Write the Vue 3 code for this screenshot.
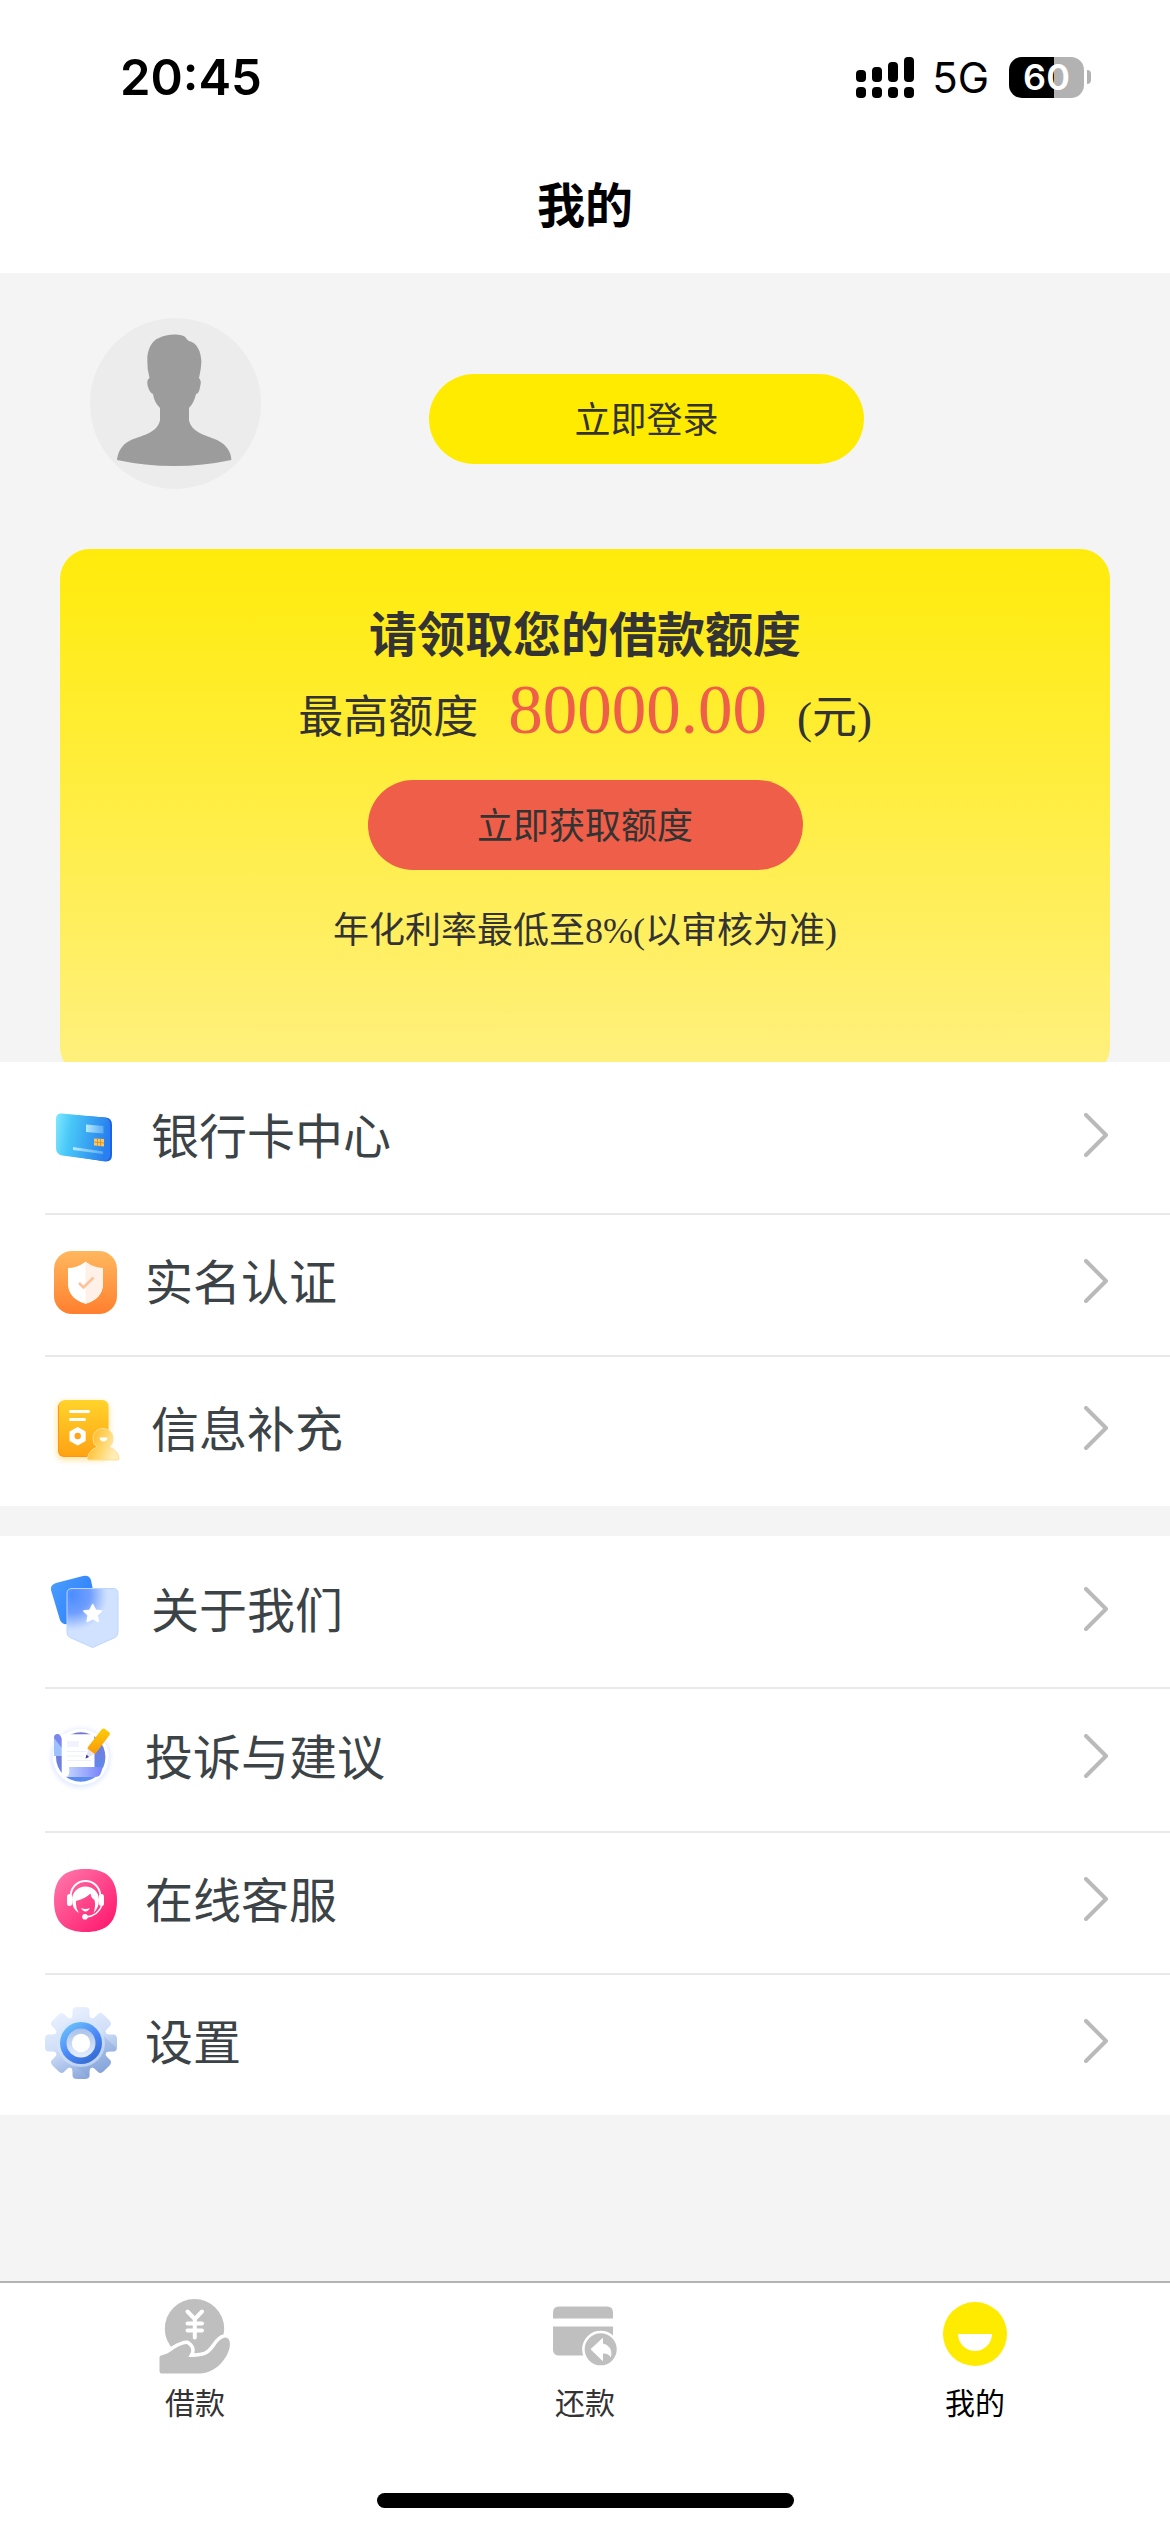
<template>
  <div class="page">
    <header class="top">
      <div class="status-bar">
        <span class="time">20:45</span>
        <div class="status-right">
          <svg class="signal" viewBox="0 0 58 41" aria-hidden="true">
            <rect x="0" y="13" width="10" height="12" rx="4" />
            <rect x="16" y="10" width="10" height="15" rx="4" />
            <rect x="32" y="5" width="10" height="20" rx="4" />
            <rect x="48" y="0" width="10" height="25" rx="4" />
            <rect v-for="x in [0, 16, 32, 48]" :key="x" :x="x" y="30" width="10" height="11" rx="4" />
          </svg>
          <span class="network">5G</span>
          <div class="battery">
            <span class="battery-body">60</span>
            <span class="battery-tip"></span>
          </div>
        </div>
      </div>
      <h1 class="title">我的</h1>
    </header>

    <main class="content">
      <section class="profile">
        <svg class="avatar" viewBox="0 0 171 171" aria-hidden="true">
          <circle cx="85.5" cy="85.5" r="85.5" fill="#ececec" />
          <path
            fill="#9c9c9c"
            d="M69 20C76 16 92 15 96 20Q97 22 99 23C107 25 111 33 111.400 44Q111 52 109 60Q112 63 110 69Q109 76 106 76Q104 85 99 90V102C101 114 115 117 127 122C137 127 141 134 141.400 142Q113 148 84 148Q55 148 27 142C28 134 31 127 41 122C54 117 68 114 70 102V90Q64 84 63 76Q60 75 58 69Q56 62 59.500 60Q57 51 57.300 42C57 32 62 22 69 20Z"
          />
        </svg>
        <button class="pill login">立即登录</button>
      </section>

      <section class="quota-card">
        <h2 class="quota-title">请领取您的借款额度</h2>
        <p class="quota-line">
          <span>最高额度</span>
          <span class="amount">80000.00</span>
          <span>(元)</span>
        </p>
        <button class="pill apply">立即获取额度</button>
        <p class="rate">年化利率最低至8%(以审核为准)</p>
      </section>

      <nav v-for="(group, i) in groups" :key="i" class="menu">
        <a v-for="item in group" :key="item.icon" href="#" class="menu-row" :class="item.size">
          <svg class="menu-icon" viewBox="0 0 80 80" aria-hidden="true">
            <g v-if="item.icon === 'bank'">
              <defs>
                <linearGradient id="bank-bg" x2="1" y2="0.15">
                  <stop offset="0" stop-color="#80e8ff" />
                  <stop offset="0.3" stop-color="#49c8f7" />
                  <stop offset="0.9" stop-color="#2d8bee" />
                  <stop offset="1" stop-color="#2a7ff0" />
                </linearGradient>
                <linearGradient id="bank-line">
                  <stop offset="0" stop-color="#b5eaff" />
                  <stop offset="1" stop-color="#58abf4" />
                </linearGradient>
              </defs>
              <path fill="#1b62ea" d="M24 18L61 20.500Q67 21 67 28V58Q67 65 60 64.500L20 58Z" />
              <path fill="url(#bank-bg)" d="M17 16.500L59 20.500Q65 21 65 28V57Q65 64 59 64L17 58.500Q11 57 11 51V22Q11 16 17 16.500Z" />
              <path fill="url(#bank-line)" d="M41 27.500L58.500 29V36.500L41 35Z" />
              <path fill="url(#bank-line)" d="M28 50L58 54.500V57L28 53Z" />
              <path fill="#fbc65c" d="M49 41.500L59 42V49.500L49 48.500Z" />
              <path stroke="#c48f3c" stroke-width="0.8" fill="none" d="M52.500 42V49M55.500 42V49M49 45L59 46" />
            </g>

            <g v-else-if="item.icon === 'verify'">
              <defs>
                <linearGradient id="verify-bg" x2="0" y2="1">
                  <stop offset="0" stop-color="#ffb85e" />
                  <stop offset="1" stop-color="#ff7f2e" />
                </linearGradient>
              </defs>
              <rect x="9" y="8" width="63" height="63" rx="18" fill="url(#verify-bg)" />
              <path fill="#fff" d="M40.500 18.700Q32 25 23 25V42Q24 56 40.500 60.700Q57 56 58 42V25Q49 25 40.500 18.700Z" />
              <path fill="#fff1e8" d="M40.500 18.700V60.700Q57 56 58 42V25Q49 25 40.500 18.700Z" />
              <path fill="none" stroke="#ffc298" stroke-width="2.600" d="M34 40L38.500 44.500L48.500 34.500" />
            </g>

            <g v-else-if="item.icon === 'info'">
              <defs>
                <linearGradient id="info-bg" x2="0" y2="1">
                  <stop offset="0" stop-color="#ffd32b" />
                  <stop offset="1" stop-color="#ffa313" />
                </linearGradient>
                <linearGradient id="info-man" x2="1" y2="0.4">
                  <stop offset="0.1" stop-color="#ffb51c" />
                  <stop offset="0.6" stop-color="#ffd66a" />
                  <stop offset="1" stop-color="#ffedb8" />
                </linearGradient>
                <filter id="info-glow" x="-30%" y="-30%" width="160%" height="160%">
                  <feGaussianBlur stdDeviation="3" />
                </filter>
              </defs>
              <rect x="12" y="12" width="52" height="58" rx="7" fill="#ffe3a0" filter="url(#info-glow)" />
              <rect x="13" y="11" width="40" height="56" rx="6" fill="#ff9512" />
              <rect x="14" y="10" width="49.500" height="56" rx="6" fill="url(#info-bg)" />
              <path stroke="#fff" stroke-width="3" stroke-linecap="round" d="M25.500 21.500H43.500M25.500 29.500H39.500" />
              <path fill="#fff" stroke="#fff" stroke-width="2" stroke-linejoin="round" d="M32.700 38L39.700 42V50.500L32.700 54.500L25.500 50.500V42Z" />
              <circle cx="32.700" cy="46" r="3.200" fill="#ffa61b" />
              <path
                fill="url(#info-man)"
                stroke="#ffdf91"
                d="M58 38.500C64 38.500 68 43 68 48.500Q68 54 64 57Q74 61 74 69Q74 70 72 70H44Q42 70 42.500 68Q44 60 52 57Q48 54 48 48.500C48 43 52 38.500 58 38.500Z"
              />
              <path fill="#fff" d="M54.500 47.500H62.500Q62 51.500 58.500 51.500T54.500 47.500Z" />
            </g>

            <g v-else-if="item.icon === 'about'">
              <defs>
                <linearGradient id="about-back" x2="1" y2="0.6">
                  <stop offset="0" stop-color="#4b9fff" />
                  <stop offset="1" stop-color="#2c7df8" />
                </linearGradient>
                <radialGradient id="about-front" gradientUnits="userSpaceOnUse" cx="27" cy="24" r="36">
                  <stop offset="0" stop-color="#4a8dff" />
                  <stop offset="0.5" stop-color="#6f9eff" />
                  <stop offset="0.9" stop-color="#c3d8ff" />
                  <stop offset="1" stop-color="#d0e2ff" />
                </radialGradient>
              </defs>
              <path fill="url(#about-back)" d="M11 12L38 5Q44 3.500 46 9L53 45L23 53Q17 54 15 49L6 19Q5 14 11 12Z" />
              <path
                fill="url(#about-front)"
                stroke="#bcd5ff"
                d="M27 17.500H68Q73 17.500 73 22.500V61Q73 65 70 66.500L47.700 76.500L25 66.500Q22 65 22 61V22.500Q22 17.500 27 17.500Z"
              />
              <path
                fill="#fff"
                stroke="#fff"
                stroke-width="1.500"
                stroke-linejoin="round"
                d="M47.700 33.500L50.500 39.200L56.700 40L52.200 44.300L53.300 50.500L47.700 47.600L42.100 50.500L43.200 44.300L38.700 40L44.900 39.200Z"
              />
            </g>

            <g v-else-if="item.icon === 'feedback'">
              <defs>
                <linearGradient id="fb-bg" x2="0.3" y2="1">
                  <stop offset="0" stop-color="#7272cf" />
                  <stop offset="0.6" stop-color="#6d80e0" />
                  <stop offset="1" stop-color="#5a8bee" />
                </linearGradient>
                <linearGradient id="fb-roll">
                  <stop offset="0" stop-color="#c8d9ff" />
                  <stop offset="1" stop-color="#7783fa" />
                </linearGradient>
                <linearGradient id="fb-pen" x2="0" y2="1">
                  <stop offset="0" stop-color="#ffcb08" />
                  <stop offset="1" stop-color="#f79b09" />
                </linearGradient>
                <filter id="fb-glow" x="-30%" y="-30%" width="160%" height="160%">
                  <feGaussianBlur stdDeviation="2" />
                </filter>
              </defs>
              <circle cx="35.700" cy="40" r="30" fill="#e4ecff" filter="url(#fb-glow)" />
              <circle cx="35.700" cy="39" r="28" fill="#fff" />
              <circle cx="35.700" cy="39" r="24.700" fill="url(#fb-bg)" />
              <path fill="#9fc0ff" d="M9 38V20Q9 16 13 16Q17 16 17 20V38Z" />
              <path fill="#7b85ee" d="M9 20Q9 16 13 16Q17 16 17 20V30Z" />
              <path fill="url(#fb-roll)" d="M24 49H57Q57 59 50 59H20Q25 56 24 49Z" />
              <path fill="#fff" d="M13 16.300H46Q49.500 17 49.500 21V49H24Q26 59 19 59Q16.700 58 16.700 54V21Q16 17 13 16.300Z" />
              <rect x="22" y="23" width="12" height="6" rx="1" fill="#f1f4ff" />
              <path stroke="#eceffd" d="M22 33.500H41M22 38H38M22 42.500H46" />
              <path fill="url(#fb-pen)" d="M57 11Q58.300 10 60 11L64.500 14.500Q65.500 16 64.500 17L51 35Q50 36.500 48.500 35.500L43 31.500Q42 30.500 43 29Z" />
              <path fill="#e3e5f5" d="M43 31L49.500 36L41 40.500Z" />
              <path fill="#393a8d" d="M41.500 36.500L44 39L40.500 40.500Z" />
            </g>

            <g v-else-if="item.icon === 'service'">
              <defs>
                <linearGradient id="service-bg" x2="1" y2="1">
                  <stop offset="0.1" stop-color="#ff71a7" />
                  <stop offset="0.9" stop-color="#ff1c70" />
                </linearGradient>
              </defs>
              <path
                fill="url(#service-bg)"
                d="M40.500 8C62 8 72 18 72 39.500S62 71 40.500 71S9 61 9 39.500S19 8 40.500 8Z"
              />
              <path fill="none" stroke="#fff" stroke-width="2" d="M25.500 35C27 15 54 15 55.500 35" />
              <rect x="22" y="33" width="5" height="12" rx="2.500" fill="#fff" />
              <rect x="54" y="33" width="5" height="12" rx="2.500" fill="#fff" />
              <path
                fill="#fff"
                d="M40.500 25.500C48 25.500 54 31 54 39Q54 47 48.500 52Q51 45 49.500 39Q46 37 45.500 32.500Q41 37 31 40Q30.500 47 34 52Q27 48 27 39C27 31 33 25.500 40.500 25.500Z"
              />
              <path fill="#fff" d="M36 47Q40.500 49 45 47Q43 50.500 40.500 50.500T36 47Z" />
              <path fill="none" stroke="#fff" stroke-width="1.500" d="M57 44Q53 55 41 56" />
              <circle cx="40" cy="55.700" r="2.800" fill="#fff" />
            </g>

            <g v-else>
              <defs>
                <linearGradient id="gear-bg" x1="0.2" x2="0.6" y2="1">
                  <stop offset="0" stop-color="#edf3ff" />
                  <stop offset="0.5" stop-color="#cfdff8" />
                  <stop offset="1" stop-color="#87a5da" />
                </linearGradient>
                <linearGradient id="gear-ring" x2="0.7" y2="1">
                  <stop offset="0" stop-color="#74cdfb" />
                  <stop offset="0.6" stop-color="#4a88f7" />
                  <stop offset="1" stop-color="#356bd2" />
                </linearGradient>
                <linearGradient id="gear-hub" x2="0" y2="1">
                  <stop offset="0" stop-color="#a9c0e8" />
                  <stop offset="1" stop-color="#e6efff" />
                </linearGradient>
                <clipPath id="gear-shape">
                  <circle cx="36" cy="40" r="27" />
                  <path
                    v-for="n in 8"
                    :key="n"
                    d="M26 16Q27.500 14 27.500 11V7Q28 4 32 4H40Q44 4 44.500 7V11Q44.500 14 46 16Z"
                    :transform="`rotate(${n * 45} 36 40)`"
                  />
                </clipPath>
              </defs>
              <g clip-path="url(#gear-shape)">
                <rect y="4" width="72" height="72" fill="url(#gear-bg)" />
                <path fill="#7e9fd8" opacity="0.3" d="M51 25L74 48L60 76H46L22 56Z" />
                <circle cx="36" cy="40" r="24" fill="#d7e6fc" opacity="0.6" />
              </g>
              <circle cx="36" cy="40" r="21" fill="url(#gear-ring)" />
              <circle cx="36" cy="40" r="14.500" fill="url(#gear-hub)" />
              <circle cx="36" cy="40" r="9.200" fill="#fff" />
            </g>
          </svg>
          <span class="menu-label">{{ item.label }}</span>
          <svg class="chevron" viewBox="0 0 24 44" aria-hidden="true">
            <path d="M2 2L22 22L2 42" />
          </svg>
        </a>
      </nav>
    </main>

    <footer class="bottom">
      <nav class="tabs">
        <a href="#" class="tab">
          <svg class="tab-icon" viewBox="0 0 72 75" aria-hidden="true">
            <circle cx="35.500" cy="29.700" r="29.700" fill="#bfbfbf" />
            <path
              fill="none"
              stroke="#fff"
              stroke-width="4"
              stroke-linecap="round"
              d="M28.500 12.500L35.800 20L43 12.500M35.800 20V38.500M28.500 24.500H43M28.500 31.500H43"
            />
            <path
              class="hand"
              d="M0.500 58Q0.500 57 2 56.500Q9 55 15 50C20 47 25 44.500 28 45Q33 48 32 53Q31 55 29.500 58Q40 58 46 56C54 53 56 45 61 41Q63 39 66 38.500C71 38.500 71.500 44 70.500 49C68 60 56 74.500 41 74.500H3Q0.500 74.500 0.500 72Z"
            />
          </svg>
          <span>借款</span>
        </a>
        <a href="#" class="tab">
          <svg class="tab-icon" viewBox="0 0 72 75" aria-hidden="true">
            <path fill="#bfbfbf" d="M10 7.500H58Q64 7.500 64 13.500V19.500H4V13.500Q4 7.500 10 7.500Z" />
            <path fill="#bfbfbf" d="M4 27.500H64V56.500H10Q4 56.500 4 50.500Z" />
            <circle cx="51.700" cy="50.300" r="17.300" fill="#bfbfbf" stroke="#fff" stroke-width="2.500" />
            <path
              fill="#fff"
              stroke="#fff"
              stroke-linejoin="round"
              d="M42 50.300L53.500 39.500V45C60 46 63 51 61.500 57.500Q59 53.500 53.500 54V61.500Z"
            />
          </svg>
          <span>还款</span>
        </a>
        <a href="#" class="tab active">
          <svg class="tab-icon" viewBox="0 0 72 75" aria-hidden="true">
            <circle cx="36" cy="35" r="32" fill="#ffeb00" />
            <path fill="#fff" d="M19 35H53A17 17 0 0 1 19 35Z" />
          </svg>
          <span>我的</span>
        </a>
      </nav>
      <div class="home-indicator"></div>
    </footer>
  </div>
</template>

<script setup>
const groups = [
  [
    { icon: "bank", label: "银行卡中心", size: "large" },
    { icon: "verify", label: "实名认证", size: "small" },
    { icon: "info", label: "信息补充", size: "large" },
  ],
  [
    { icon: "about", label: "关于我们", size: "large" },
    { icon: "feedback", label: "投诉与建议", size: "medium" },
    { icon: "service", label: "在线客服", size: "small" },
    { icon: "setting", label: "设置", size: "small" },
  ],
];
</script>

<style>
body {
  margin: 0;
}
</style>

<style scoped>
.page {
  display: flex;
  flex-direction: column;
  min-height: 100vh;
  background: #f4f4f4;
  color: #333;
  font-family: "Liberation Serif", "Noto Sans CJK SC", serif;
}

.page a {
  color: inherit;
  text-decoration: none;
}

.top {
  background: #fff;
  color: #000;
}

.status-bar {
  display: flex;
  align-items: center;
  justify-content: space-between;
  height: 120px;
  padding: 17px 79px 0 120px;
  font-family: Inter, sans-serif;
}

.time {
  font-size: 49px;
  font-weight: 600;
}

.status-right {
  display: flex;
  align-items: center;
}

.signal {
  width: 58px;
  height: 41px;
}

.network {
  margin: 0 20px 0 18px;
  font-size: 42px;
}

.battery {
  display: flex;
  align-items: center;
  gap: 3px;
}

.battery-body {
  width: 75px;
  border-radius: 13px;
  background: linear-gradient(90deg, #000 60%, #b2b2b2 60%);
  color: #fff;
  font-size: 36px;
  font-weight: 600;
  line-height: 41px;
  text-align: center;
}

.battery-tip {
  width: 4px;
  height: 14px;
  border-radius: 0 4px 4px 0;
  background: #b2b2b2;
}

.title {
  margin: 0;
  padding-bottom: 6px;
  font-family: "Noto Sans CJK SC", sans-serif;
  font-size: 48px;
  font-weight: 700;
  line-height: 130px;
  text-align: center;
}

.content {
  flex: 1;
}

.profile {
  display: flex;
  align-items: flex-end;
  gap: 168px;
  padding: 45px 90px 60px;
}

.avatar {
  width: 171px;
  height: 171px;
}

.pill {
  width: 435px;
  height: 90px;
  padding: 0 0 4px;
  border: none;
  border-radius: 45px;
  color: #333;
  font-family: inherit;
  font-size: 36px;
}

.login {
  margin-bottom: 25px;
  background: #ffeb00;
}

.quota-card {
  display: flex;
  flex-direction: column;
  align-items: center;
  margin: 0 60px -15px;
  padding: 57px 0 122px;
  border-radius: 30px;
  background: linear-gradient(#ffeb0a, #fff080);
}

.quota-title {
  margin: 0;
  font-size: 48px;
  line-height: 60px;
}

.quota-line {
  display: flex;
  align-items: baseline;
  gap: 30px;
  margin: 10px 0 35px;
  font-size: 45px;
  line-height: 45px;
}

.amount {
  color: #ee5e48;
  font-size: 69px;
  line-height: 69px;
}

.apply {
  background: #ee5e48;
}

.rate {
  margin: 37px 0 0;
  font-size: 36px;
  line-height: 48px;
}

.menu {
  position: relative;
  padding-left: 45px;
  background: #fff;
}

.menu + .menu {
  margin-top: 30px;
}

.menu-row {
  display: flex;
  align-items: center;
  box-sizing: border-box;
  height: 142px;
  padding: 0 62px 4px 0;
  border-top: 2px solid #e9e9e9;
}

.menu-row:first-child {
  border-top-color: #fff;
}

.menu-row.medium {
  height: 144px;
}

.menu-row.large {
  height: 151px;
}

.menu-icon {
  width: 80px;
  height: 80px;
}

.menu-label {
  flex: 1;
  padding: 2px 0 0 20px;
  color: #3c4347;
  font-size: 48px;
  line-height: 60px;
}

.large .menu-label {
  padding-left: 26px;
}

.chevron {
  width: 24px;
  height: 44px;
  padding-bottom: 4px;
  fill: none;
  stroke: #bababa;
  stroke-width: 4;
  stroke-linecap: round;
  stroke-linejoin: round;
}

.bottom {
  border-top: 2px solid #b4b4b4;
  background: #fff;
}

.tabs {
  display: flex;
  padding: 16px 0 69px;
}

.tab {
  display: flex;
  flex: 1;
  flex-direction: column;
  align-items: center;
  gap: 10px;
  font-size: 30px;
  line-height: 40px;
}

.page .tab.active {
  color: #000;
}

.tab-icon {
  width: 72px;
  height: 75px;
}

.hand {
  fill: #bfbfbf;
  stroke: #fff;
  stroke-width: 7;
  paint-order: stroke;
}

.home-indicator {
  width: 417px;
  height: 15px;
  margin: 0 auto 24px;
  border-radius: 8px;
  background: #000;
}
</style>
